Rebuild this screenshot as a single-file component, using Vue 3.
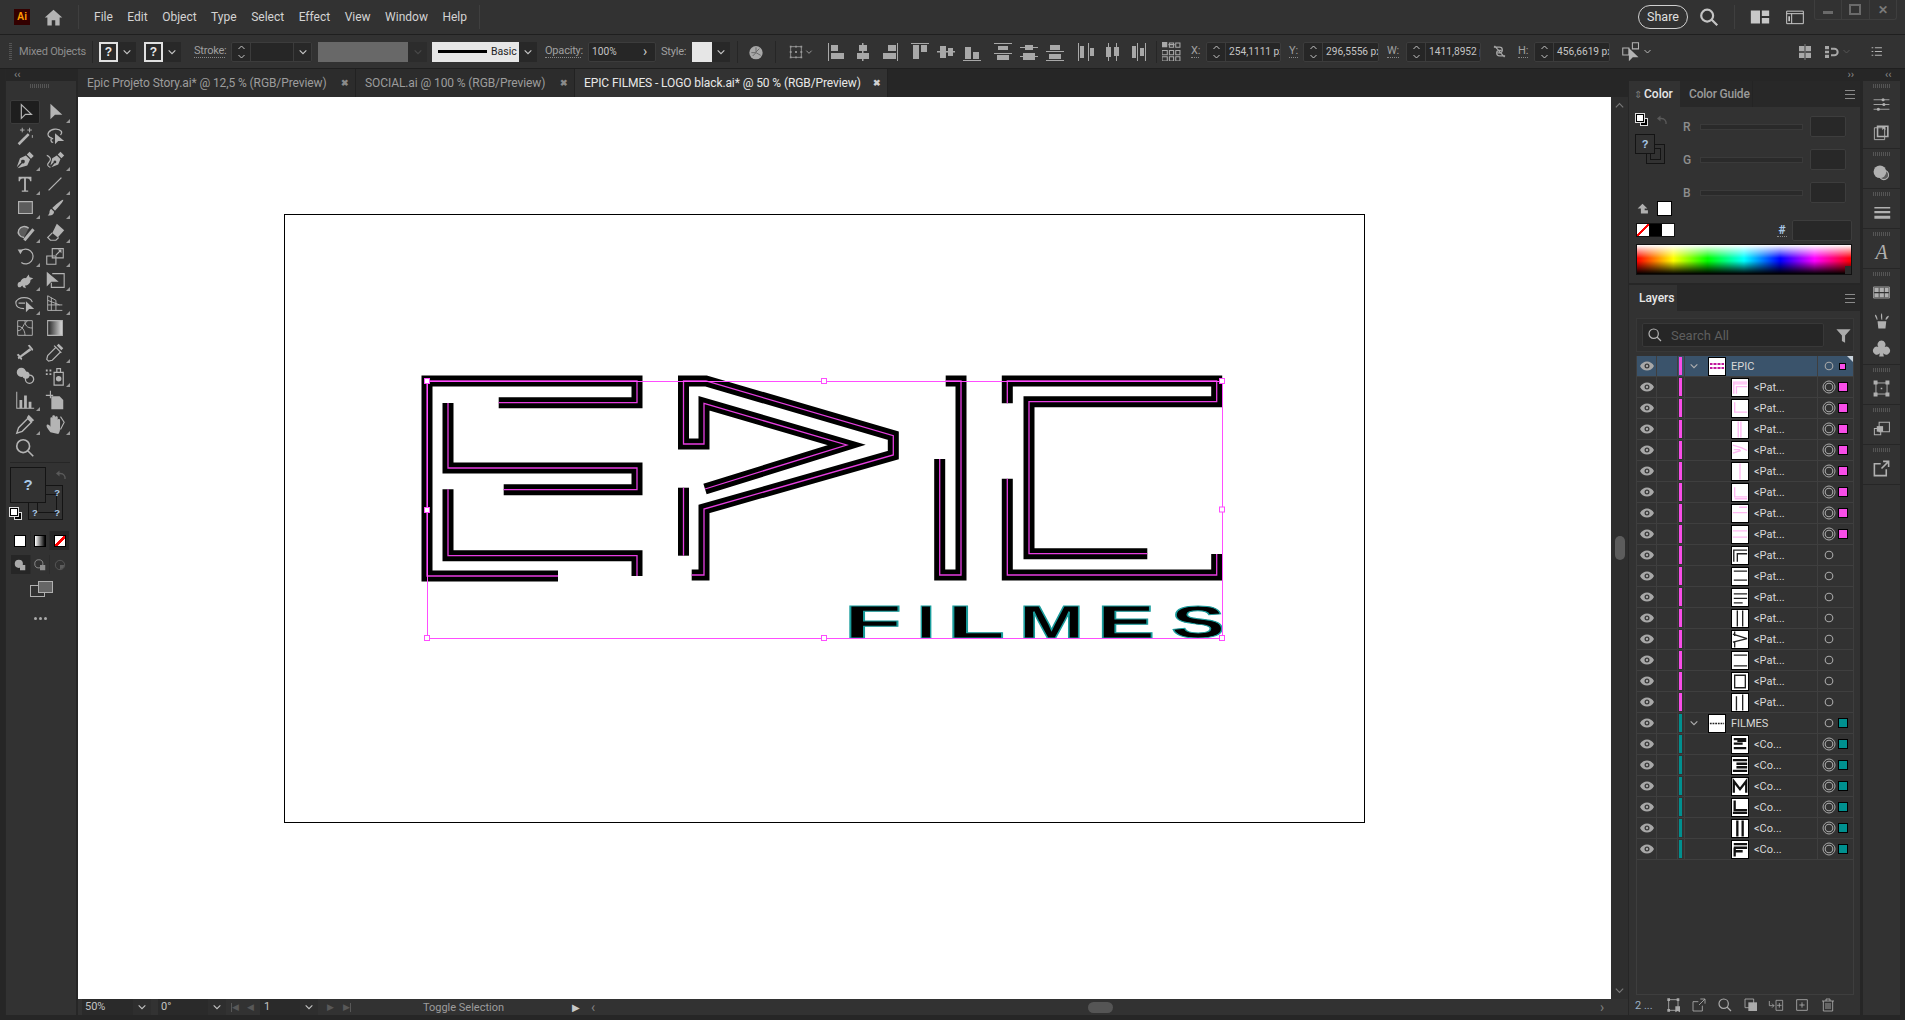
<script setup>
import { h } from 'vue'

const icons = {
  select: { s: 'M8 4v15l4.5-4.5H19z', w: 1.3 },
  direct: { f: 'M7 3v17l5-5h8z' },
  wand: { f: 'M4 20l11-11 2 2L6 22z', s: 'M9 3v5M6.5 5.5h5M17 3v5M14.5 5.5h5M20 11v3', w: 1 },
  lasso: { s: 'M10 15c-5-1-7-4-5-7 3-4 11-5 14-1 1 2 0 3-1 4M9 14c-2 1-2 5 1 5', f: 'M12 9v12l3.5-3.5H22z' },
  pen: { f: 'M17 3l4.5 4.5-3 3L14 6zM13 7l4.500 4.500-3 6.500L4 21l5-5.500a2 2 0 1 0-1-1L3 20 6.500 10z' },
  curve: { f: 'M18 3l4 4-3 3-4-4zM14 7l4 4-2.500 6L8 20l3.500-4.500a1.500 1.500 0 1 0-1-1L7 18l2-8z', s: 'M7 20c-3-1-4-3-2-5s3-4 1-6-3-2-3-2', w: 1.3 },
  type: { f: 'M5 4h14v5h-1.500c0-2-1-3-3-3H13v13h2.500v1.500h-7V19H11V6H9.500c-2 0-3 1-3 3H5z' },
  line: { s: 'M5 19L19 5', w: 1.4 },
  rect: { d: 'M5 5h15v13H5z', s: 'M5 5h15v13H5z', w: 1.2 },
  brush: { f: 'M21 3c1 1-6 9-9 12l-3-3c3-3 11-10 12-9zM8 13l3 3c0 3-3 5-7 4 2-1 2-3 2-4s1-3 2-3z' },
  shaper: { d: 'M11 18a6.500 6 0 1 1 5-10z', s: 'M11 18a6.500 6 0 1 1 5-10', f: 'M10 20l10-12 2.500 2-10 12z' },
  eraser: { f: 'M14 3l8 7-7 8-6-5z', s: 'M9 13l-5 5 3 3h6l3-3', w: 1.2 },
  rotate: { s: 'M7 7a8 8 0 1 1 1 12', f: 'M4 5l6 0-3 5z', w: 1.3 },
  scale: { s: 'M3 12h10v9H3zM9 4h12v10H9zM13 11l5-5', w: 1.2, f: 'M15 5h4v4z' },
  warp: { f: 'M5 20c-2-2-1-6 2-6 1-3 4-5 6-4l3-4 1 3 4 1-3 2c0 4-3 6-6 6l1 3-3-1-1-2-2 2z' },
  free: { f: 'M3 3v16l5-5h8z', s: 'M9 5h13v15H8v-5', w: 1.2 },
  builder: { s: 'M11 17c-5 0-9-2-9-6s5-6 9-6 8 2 9 5M5 11h7', w: 1.2, f: 'M13 9v12l3.500-3.500H22z' },
  persp: { s: 'M4 3v16h16M4 3l9 5v11M4 8l13 5M4 13h16M8 5v14', w: 1 },
  mesh: { s: 'M4 4h16v16H4zM4 10c5 0 8 5 8 10M12 4c0 5 2 8 8 8M4 15c3 0 5-2 6-5s5-6 5-6', w: 1 },
  gradient: { g: 'M4 4h16v16H4z', s: 'M4 4h16v16H4z', w: 1.2 },
  measure: { f: 'M5 20l-1-2 13-10 2 2zM3 15l2-1 4 5-1 2zM15 5l2-1 4 5-1 2z' },
  dropper: { s: 'M5 22l-2-2 1-4 9-9 5 5-9 9zM11 5l8 8', w: 1.3, f: 'M16 3l5 5-2 2-5-5z' },
  blend: { f: 'M8 3a5 5 0 1 1 0 10A5 5 0 0 1 8 3zM13 7a4 4 0 1 1 0 8 4 4 0 0 1 0-8z', s: 'M17 11a4.500 4.500 0 1 1-.1 9 4.500 4.500 0 0 1 .1-9z', w: 1.4 },
  spray: { s: 'M11 8h10v14H11zM14 8V4h4v4', w: 1.3, f: 'M16 12a3 3 0 1 1 0 6 3 3 0 0 1 0-6zM2 5h2v2H2zM6 5h2v2H6zM2 9h2v2H2zM6 9h2v2H6z' },
  graph: { s: 'M3 3v18h19', w: 1.1, f: 'M6 12h3v9H6zM11 7h3v14h-3zM16 14h3v7h-3z' },
  artboard: { f: 'M8 8h9l4 4v10H8z', s: 'M2 7h8M7 2v8', w: 1.2 },
  slice: { s: 'M3 22l2-6L15 6l4 4L9 20z', f: 'M16 2l6 6-3 2-5-5z' },
  hand: { f: 'M7 21c-2-3-5-6-4-8 1-1 3 0 4 2V6c0-2 2-2 2 0v4-6c0-2 3-2 3 0v6-5c0-2 3-2 3 0v6-3c0-2 2.500-2 2.500 0v9c0 3-1 5-2 6z', s: 'M18 4l4 6-4 8', w: 1.2 },
  zoom: { s: 'M10 3a7 7 0 1 1 0 14 7 7 0 0 1 0-14zM15 15l6 6', w: 1.8 },
  home: { f: 'M12 3l10 9h-3v9h-5v-6h-4v6H5v-9H2z' },
  search: { s: 'M10 4a6.500 6.500 0 1 1 0 13 6.500 6.500 0 0 1 0-13zM15 15l6 6', w: 2.4 },
  workspace: { f: 'M2 5h10v14H2zM14 5h8v6h-8zM14 13h8v6h-8z' },
  panelwin: { s: 'M2 5h20v15H2zM2 8h20M8 8v12', w: 1.2, f: 'M4 11h2v6H4z' },
  filter: { f: 'M3 4h18l-7 8v9l-4-2v-7z' },
  sliders: { s: 'M2 6h20M2 12h20M2 18h20', w: 1.1, f: 'M14 4a2 2 0 1 1 0 4 2 2 0 0 1 0-4zM15 10a2 2 0 1 1 0 4 2 2 0 0 1 0-4zM8 16a2 2 0 1 1 0 4 2 2 0 0 1 0-4z' },
  library: { s: 'M3 6h13v15H3z', w: 1.2, f: 'M6 3h15v15H6zm2 2v11h11V5h-2v4l-2-2-2 2V5z' },
  appearance: { f: 'M10 3a8 8 0 1 1 0 16 8 8 0 0 1 0-16z', d: 'M15 9a6 6 0 1 1 0 12 6 6 0 0 1 0-12z', s: 'M15 9a6 6 0 1 1 0 12 6 6 0 0 1 0-12z', w: 1.3 },
  strokep: { f: 'M3 5h20v2H3zM3 10h20v3H3zM3 16h20v4H3z' },
  swatches: { s: 'M2 5h20v14H2z', w: 1, f: 'M3 6h5.500v5.500H3zM9.500 6H15v5.500H9.500zM16 6h5v5.500h-5zM3 13h5.500v5H3zM9.500 13H15v5H9.500zM16 13h5v5h-5z' },
  brushes: { f: 'M7 13h11l-1 9H8zM6 11C5 8 3 6 4 5s3 3 3 6zM12 11c-1-3-1-7 0-8s1 5 1 8zM17 11c0-3 3-5 4-5s-1 4-3 5z' },
  symbols: { f: 'M12 2a5 5 0 0 1 4 8 5 5 0 1 1-2 8l1 4H9l1-4a5 5 0 1 1-2-8 5 5 0 0 1 4-8z' },
  transform: { s: 'M5 5h14v14H5z', w: 1.2, f: 'M2 2h5v5H2zM17 2h5v5h-5zM2 17h5v5H2zM17 17h5v5h-5zM11 11h2v2h-2z' },
  pathfinder: { s: 'M9 4h13v12H9zM3 12h8v8H3z', w: 1.3, f: 'M6 9h8v7H6z' },
  exportp: { s: 'M18 13v8H3V6h8M14 3h7v7M21 3l-9 9', w: 2 },
  artb: { s: 'M4 4h14v16H4z', w: 1.3, f: 'M2 2h4v4H2zM16 2h4v4h-4zM2 18h4v4H2zM14 14h7v9l-3.500-2-3.500 2z' },
  exp2: { s: 'M17 13v8H3V7h8M14 3h7v7M21 3l-9 9', w: 1.3 },
  mag: { s: 'M10 3a7 7 0 1 1 0 14 7 7 0 0 1 0-14zM15 15l6 6', w: 1.8 },
  clip: { s: 'M3 3h13v13H3z', w: 1.3, f: 'M8 8h13v13H8z' },
  sublayer: { s: 'M2 6v7h7M6 10l3 3-3 3M12 5h10v15H12zM17 9v7M13.500 12.500h7', w: 1.2 },
  newl: { s: 'M4 4h16v16H4zM12 8v8M8 12h8', w: 1.3 },
  trash: { s: 'M3 6h18M9 6V3h6v3M5 6v15h14V6M9 9v9M12 9v9M15 9v9', w: 1.3 },
  alignL: { vb: 18, f: 'M0 0h1v18H0zM3 2h7v6H3zM3 10h13v6H3z' },
  alignC: { vb: 18, f: 'M8 0h1.500v18H8zM5 2h8v6H5zM3 10h12v6H3z' },
  alignR: { vb: 18, f: 'M17 0h1v18h-1zM8 2h8v6H8zM3 10h13v6H3z' },
  alignT: { vb: 18, f: 'M0 0h18v1H0zM2 2h6v14H2zM10 2h6v7h-6z' },
  alignM: { vb: 18, f: 'M0 8h18v1.500H0zM3 3h6v12H3zM11 5h5v8h-5z' },
  alignB: { vb: 18, f: 'M0 17h18v1H0zM2 4h6v12H2zM10 9h6v7h-6z' },
  distT: { vb: 18, f: 'M0 0h18v1H0zM4 3h10v4H4zM0 10h18v1H0zM3 12h12v5H3z' },
  distV: { vb: 18, f: 'M0 4h18v1H0zM5 2h8v5H5zM0 13h18v1H0zM3 10h12v7H3z' },
  distB: { vb: 18, f: 'M0 8h18v1H0zM4 2h10v5H4zM0 17h18v1H0zM3 11h12v5H3z' },
  distL: { vb: 18, f: 'M1 0h1v18H1zM3 3h4v12H3zM11 0h1v18h-1zM13 5h4v8h-4z' },
  distC: { vb: 18, f: 'M5 0h1v18H5zM3 4h5v10H3zM13 0h1v18h-1zM11 4h5v9h-5z' },
  distR: { vb: 18, f: 'M8 0h1v18H8zM3 3h4v12H3zM16 0h1v18h-1zM11 5h4v8h-4z' },
  refp: { vb: 18, f: 'M0 0h5v5H0z', s: 'M6 2.500h6M0 8h5v4H0zM7 8h4v4H7zM13 8h4v4h-4zM13 1h4v4h-4zM7 1h4v4H7zM0 14h5v4H0zM7 14h4v4H7zM13 14h4v4h-4z', w: 1 },
  alignto: { vb: 18, s: 'M3 3h12v12H3z', w: 1, f: 'M2 2h2v2H2zM8 2h2v2H8zM14 2h2v2h-2zM2 8h2v2H2zM14 8h2v2h-2zM2 14h2v2H2zM8 14h2v2H8zM14 14h2v2h-2zM8 8h2v2H8z' },
  link: { s: 'M3 5h9a4 4 0 0 1 0 9H9M21 19h-9a4 4 0 0 1 0-9h3M4 3l16 18', w: 2 },
  xform: { s: 'M2 8h7v8H2zM13 2h7v7h-7z', w: 1.2, f: 'M9 8v15l4.500-4.500H20z' },
  isolate: { f: 'M3 3h8v8H3zM13 3h8v8h-8zM3 13h8v8H3zM13 13h8v8h-8z', s: 'M12 0v24', w: 1 },
  arrange: { f: 'M3 3h6v5H3zM3 16h6v5H3zM3 10h6v4H3z', s: 'M12 7h5a5 5 0 0 1 0 10h-5', w: 3 },
  listp: { s: 'M9 5h13M9 12h13M9 19h13M3 5h3M3 12h3M3 19h3', w: 2 },
  globe: { g2: true, f: 'M12 3a10 10 0 1 1 0 20 10 10 0 0 1 0-20z', s: 'M12 5v7M5 13h7M17 7l-5 5M7 18l5-5M19 17l-7-4', w: 1.5 },
  chev: { s: 'M4 8l8 8 8-8', w: 2.6 },
  chevu: { s: 'M4 16l8-8 8 8', w: 2.6 },
  swap: { s: 'M20 20c1-6-3-11-9-11H6', w: 2.6, f: 'M9 3v12L2 9z' },
  oog: { f: 'M12 3l9 9h-5v3h6v6H9v-9H3z' },
  modeN: { f: 'M10 3a7 7 0 1 1 0 14 7 7 0 0 1 0-14zM12 12h9v9h-9z' },
  modeB: { s: 'M10 3a7 7 0 1 1 0 14 7 7 0 0 1 0-14z', w: 1.6, f: 'M12 12h9v9h-9z' },
  modeI: { s: 'M12 4a8 8 0 1 1 0 16 8 8 0 0 1 0-16z', w: 1.4, f: 'M12 12h7a7 7 0 0 1-7 7z' }
}

// small functional icon, everything is drawn from the table above
const Ico = (props) => {
  const ic = icons[props.n]
  const vb = ic.vb || 24
  const c = props.c || '#b4b4b4'
  const size = props.s || 24
  const kids = []
  if (ic.d) kids.push(h('path', { d: ic.d, fill: '#5c5c5c' }))
  if (ic.g) kids.push(h('path', { d: ic.g, fill: 'url(#toolGrad)' }))
  if (ic.f) kids.push(h('path', { d: ic.f, fill: c }))
  if (ic.s) kids.push(h('path', { d: ic.s, fill: 'none', stroke: ic.g2 ? '#6a6a6a' : c, 'stroke-width': ic.w || 1.5 }))
  return h('svg', { viewBox: `0 0 ${vb} ${vb}`, width: size, height: size, style: 'display:block;flex:none' }, kids)
}
Ico.props = ['n', 'c', 's']

const menus = ['File', 'Edit', 'Object', 'Type', 'Select', 'Effect', 'View', 'Window', 'Help']

const docs = [
  { name: 'Epic Projeto Story.ai* @ 12,5 % (RGB/Preview)', cls: 'd1' },
  { name: 'SOCIAL.ai @ 100 % (RGB/Preview)', cls: 'd2' },
  { name: 'EPIC FILMES - LOGO black.ai* @ 50 % (RGB/Preview)', cls: 'd3', active: true }
]

const tools = [
  ['select', 0, 1], ['direct', 1, 0],
  ['wand', 0, 0], ['lasso', 0, 0],
  ['pen', 1, 0], ['curve', 1, 0],
  ['type', 1, 0], ['line', 1, 0],
  ['rect', 1, 0], ['brush', 1, 0],
  ['shaper', 1, 0], ['eraser', 1, 0],
  ['rotate', 1, 0], ['scale', 1, 0],
  ['warp', 1, 0], ['free', 1, 0],
  ['builder', 1, 0], ['persp', 1, 0],
  ['mesh', 0, 0], ['gradient', 0, 0],
  ['measure', 0, 0], ['dropper', 1, 0],
  ['blend', 0, 0], ['spray', 1, 0],
  ['graph', 1, 0], ['artboard', 0, 0],
  ['slice', 1, 0], ['hand', 1, 0],
  ['zoom', 0, 0]
].map(([n, fly, on]) => ({ n, fly, on }))

const alignGroups = [
  ['alignL', 'alignC', 'alignR'],
  ['alignT', 'alignM', 'alignB'],
  ['distT', 'distV', 'distB'],
  ['distL', 'distC', 'distR']
]

const pink = '#f84de8'
const teal = '#00908f'
const pale = '#ffb8f2'
const pathThumbs = [
  [pale, 'M2 16V3h15M2 5h15M5 16V8h12'],
  [pale, 'M3 2v11h14'],
  [pale, 'M7 0v18M10 0v18'],
  [pale, 'M1 3l10 3 6 3M1 12l9-3M2 8l7 0'],
  [pale, 'M9 0v18'],
  [pale, 'M3 3v11h14M3 16h14'],
  [pale, 'M1 8h16M8 2h9'],
  [pale, 'M1 5h16M1 12h16'],
  ['#222', 'M2 16V3h15M6 16V7h11'],
  ['#222', 'M2 3h15M2 13h15'],
  ['#222', 'M2 5h15M2 10h15M2 15h10'],
  ['#222', 'M6 0v18M12 0v18'],
  ['#222', 'M1 3l16 5M1 12l16-4M3 0v5M3 12v6'],
  ['#222', 'M2 3h15M2 15h15'],
  ['#222', 'M3 2h12v14H3z'],
  ['#222', 'M5 2v16M12 0v18']
]
const coThumbs = [
  'M2 3h14M2 8h10M2 13h14M6 5h10',
  'M1 3h16M5 7h12M5 11h12M1 15h16',
  'M2 16V3l7 9 7-9v13',
  'M3 1v11h14M1 15h16',
  'M6 0v18M12 0v18',
  'M2 3h15M2 7h15M2 11h10M3 7v10'
]

const layers = [
  { name: 'EPIC', parent: true, sel: true, bar: pink, ring: 1, sq: pink, mini: true },
  ...pathThumbs.map((t, i) => ({
    name: '<Pat...', bar: pink, ring: i < 8 ? 2 : 1, sq: i < 8 ? pink : null, thumb: t[1], tc: t[0]
  })),
  { name: 'FILMES', parent: true, bar: teal, ring: 1, sq: teal, thumb: 'M1 9h16', tc: '#222', dash: true },
  ...coThumbs.map((d) => ({ name: '<Co...', bar: teal, ring: 2, sq: teal, thumb: d, tc: '#111', thick: true }))
]

const dock = [
  ['sliders', 'library'], ['appearance'], ['strokep'], ['typeA'],
  ['swatches', 'brushes', 'symbols'], ['transform'], ['pathfinder'], ['exportp']
]
const footerIcons = ['artb', 'exp2', 'mag', 'clip', 'sublayer', 'newl', 'trash']

// artwork, in page coordinates (viewBox of the canvas starts at the canvas corner)
const logo = [
  'M558 576H427V381H637V402.700H498.700',
  'M448 403V468H637V489.700H503.700',
  'M448 489.300V555.700H637V576',
  'M705 489L846.700 445L704 403.300V444H683.500V381H706L893.300 435.700V455L704 509V575H691.700',
  'M683.500 487.700V555.700',
  'M945.700 381H961V575H939.700V459',
  'M1007.300 403.300V381H1216.700V401.700H1029V553.700H1147.300',
  'M1007.300 478.700V575H1216.700V554'
]
const filmes = [
  { t: 'F', x: 844, w: 58 }, { t: 'I', x: 917, w: 18 }, { t: 'L', x: 947, w: 58 },
  { t: 'M', x: 1019, w: 65 }, { t: 'E', x: 1097, w: 58 }, { t: 'S', x: 1171, w: 54 }
]
const handles = [
  [824, 381], [1222, 381], [1222, 509.5], [1222, 638], [824, 638], [427, 638]
]
</script>

<template>
  <div class="app">
    <svg class="defs" width="0" height="0">
      <defs>
        <linearGradient id="toolGrad"><stop offset="0" stop-color="#222" /><stop offset="1" stop-color="#ddd" /></linearGradient>
      </defs>
    </svg>

    <header class="menubar">
      <div class="ailogo">Ai</div>
      <Ico class="homeico" n="home" :s="21" />
      <i class="vsep s1"></i>
      <nav class="menus"><span v-for="m in menus" :key="m">{{ m }}</span></nav>
      <i class="vsep s2"></i>
      <div class="winright">
        <div class="share">Share</div>
        <Ico n="search" :s="22" c="#c4c4c4" />
        <i class="vsep s3"></i>
        <Ico n="workspace" :s="22" c="#c8c8c8" />
        <Ico n="panelwin" :s="20" c="#c8c8c8" />
        <div class="winbtns">
          <span class="wb"><b class="minb"></b></span>
          <span class="wb"><b class="maxb"></b></span>
          <span class="wb closeb">✕</span>
        </div>
      </div>
    </header>

    <section class="controlbar">
      <i class="grip"></i>
      <span class="lbl mixed">Mixed Objects</span>
      <i class="csep m11"></i>
      <div class="qdrop m6"><b class="qbox">?</b><span class="dd"><Ico n="chev" :s="10" c="#c8c8c8" /></span></div>
      <div class="qdrop m8"><b class="qbox">?</b><span class="dd"><Ico n="chev" :s="10" c="#c8c8c8" /></span></div>
      <span class="lbl dot m13 wstroke">Stroke:</span>
      <div class="field m6 fstroke">
        <span class="spin"><Ico n="chevu" :s="9" c="#c8c8c8" /><Ico n="chev" :s="9" c="#c8c8c8" /></span>
        <span class="val"></span>
        <span class="dd"><Ico n="chev" :s="10" c="#c8c8c8" /></span>
      </div>
      <div class="graybox m6"><i></i><span class="dd dim"><Ico n="chev" :s="10" c="#4a4a4a" /></span></div>
      <div class="brushbox m5"><div class="brushface"><i></i><span>Basic</span></div><span class="dd"><Ico n="chev" :s="10" c="#c8c8c8" /></span></div>
      <span class="lbl dot m8 wopac">Opacity:</span>
      <div class="field m7 fopac"><span class="val">100%</span><span class="arr">›</span></div>
      <span class="lbl m5 wstyle">Style:</span>
      <div class="stylebox m5"><i></i><span class="dd"><Ico n="chev" :s="10" c="#c8c8c8" /></span></div>
      <i class="csep m7"></i>
      <Ico class="m10" n="globe" :s="16" c="#a8a8a8" />
      <i class="csep m11"></i>
      <div class="alignto m12"><Ico n="alignto" :s="16" c="#9a9a9a" /><Ico class="ch" n="chev" :s="8" c="#aaa" /></div>
      <div class="aligns m16">
        <div v-for="(g, i) in alignGroups" :key="i" class="agroup">
          <Ico v-for="n in g" :key="n" :n="n" :s="18" c="#a8a8a8" />
        </div>
      </div>
      <i class="csep m9"></i>
      <Ico class="m5" n="refp" :s="19" c="#a8a8a8" />
      <span class="lbl dot m10 wx">X:</span>
      <div class="field m7 fx"><span class="spin"><Ico n="chevu" :s="9" c="#c8c8c8" /><Ico n="chev" :s="9" c="#c8c8c8" /></span><span class="val">254,1111 px</span></div>
      <span class="lbl dot m8 wy">Y:</span>
      <div class="field m5 fy"><span class="spin"><Ico n="chevu" :s="9" c="#c8c8c8" /><Ico n="chev" :s="9" c="#c8c8c8" /></span><span class="val">296,5556 px</span></div>
      <span class="lbl dot m8 ww">W:</span>
      <div class="field m7 fx"><span class="spin"><Ico n="chevu" :s="9" c="#c8c8c8" /><Ico n="chev" :s="9" c="#c8c8c8" /></span><span class="val">1411,8952 p</span></div>
      <Ico class="m11" n="link" :s="15" c="#a8a8a8" />
      <span class="lbl dot m11 wh">H:</span>
      <div class="field m6 fy"><span class="spin"><Ico n="chevu" :s="9" c="#c8c8c8" /><Ico n="chev" :s="9" c="#c8c8c8" /></span><span class="val">456,6619 px</span></div>
      <div class="xform m11"><Ico n="xform" :s="21" c="#b4b4b4" /><Ico class="ch" n="chev" :s="9" c="#bbb" /></div>
      <div class="ctlright">
        <Ico n="isolate" :s="16" c="#a8a8a8" />
        <Ico n="arrange" :s="16" c="#a8a8a8" />
        <Ico class="dimch" n="chev" :s="9" c="#555" />
        <Ico class="listico" n="listp" :s="13" c="#b4b4b4" />
      </div>
    </section>

    <div class="workspace">
      <aside class="toolbox">
        <div class="mini"><span>‹‹</span></div>
        <i class="hgrip"></i>
        <div class="toolgrid">
          <div v-for="t in tools" :key="t.n" class="tool" :class="{ on: t.on, fly: t.fly }">
            <Ico :n="t.n" :s="22" />
          </div>
        </div>
        <div class="toolsep"></div>
        <div class="proxy">
          <div class="fillbox">?</div>
          <div class="strokebox">
            <i class="strokein"></i>
            <b class="q1">?</b><b class="q2">?</b><b class="q3">?</b>
          </div>
          <Ico class="swaparr" n="swap" :s="12" c="#5a5a5a" />
          <div class="defcol"><i></i><i></i></div>
        </div>
        <div class="btnrow">
          <span><i class="cw"></i></span>
          <span><i class="cg"></i></span>
          <span class="cur"><i class="cn"></i></span>
        </div>
        <div class="btnrow modes">
          <span class="cur"><Ico n="modeN" :s="14" c="#aaa" /></span>
          <span><Ico n="modeB" :s="14" c="#8e8e8e" /></span>
          <span><Ico n="modeI" :s="14" c="#5c5c5c" /></span>
        </div>
        <div class="screenmode"><i></i><i></i></div>
        <div class="dots"><i></i><i></i><i></i></div>
      </aside>

      <main class="center">
        <div class="doctabs">
          <div v-for="d in docs" :key="d.name" class="doctab" :class="[d.cls, { active: d.active }]">
            <span>{{ d.name }}</span><b>✖</b>
          </div>
        </div>
        <div class="canvasrow">
          <svg class="canvas" viewBox="78 97 1533 902" width="1533" height="902">
            <rect x="284.500" y="214.500" width="1080" height="608" fill="#fff" stroke="#000" stroke-width="1" />
            <path v-for="d in logo" :key="d" :d="d" fill="none" stroke="#000" stroke-width="11" stroke-miterlimit="10" />
            <text
              v-for="l in filmes" :key="l.t" :x="l.x" y="638" :textLength="l.w" lengthAdjust="spacingAndGlyphs"
              font-family="Liberation Sans" font-weight="700" font-size="47" fill="#000" stroke="#1a9c9c" stroke-width="1"
            >{{ l.t }}</text>
            <path v-for="d in logo" :key="'m' + d" :d="d" fill="none" stroke="#e63de0" stroke-width="1.300" stroke-miterlimit="10" />
            <rect x="427.500" y="381.500" width="795" height="257" fill="none" stroke="#ff4dff" stroke-width="1" />
            <rect x="424.500" y="378.500" width="5" height="5" fill="#fff" stroke="#ff4dff" />
            <rect x="424.500" y="507.500" width="5" height="5" fill="#fff" stroke="#ff4dff" />
            <rect v-for="p in handles" :key="p[0] + '-' + p[1]" :x="p[0] - 2.5" :y="p[1] - 2.5" width="5" height="5" fill="#fff" stroke="#ff4dff" />
          </svg>
          <div class="vscroll">
            <Ico class="sarrow" n="chevu" :s="11" c="#777" />
            <i class="vthumb"></i>
            <Ico class="sarrow" n="chev" :s="11" c="#777" />
          </div>
        </div>
        <footer class="statusbar">
          <div class="sf w50"><span>50%</span></div><span class="sd"><Ico n="chev" :s="10" c="#c4c4c4" /></span>
          <div class="sf w50b"><span>0°</span></div><span class="sd"><Ico n="chev" :s="10" c="#c4c4c4" /></span>
          <span class="nav"><i class="bar"></i>◀</span><span class="nav">◀</span>
          <div class="sf w40"><span>1</span></div><span class="sd"><Ico n="chev" :s="10" c="#c4c4c4" /></span>
          <span class="nav nr">▶</span><span class="nav">▶<i class="bar"></i></span>
          <span class="toggle">Toggle Selection</span>
          <span class="play">▶</span>
          <span class="lt">‹</span>
          <div class="hscroll"><i></i></div>
          <span class="lt rt">›</span>
        </footer>
      </main>

      <div class="panels">
        <div class="mini right"><span>››</span></div>
        <section class="panel color">
          <div class="ptabs">
            <div class="ptab on"><em class="updown">⇕</em>Color</div>
            <div class="ptab off">Color Guide</div>
            <div class="pmenu"><i></i><i></i><i></i></div>
          </div>
          <div class="colorbody">
            <div class="cleft">
              <div class="cmini">
                <div class="defcol small"><i></i><i></i></div>
                <Ico class="swaparr2" n="swap" :s="12" c="#5a5a5a" />
              </div>
              <div class="cproxy">
                <div class="cfill">?</div>
                <div class="cstroke"><i></i></div>
              </div>
              <div class="oog"><Ico n="oog" :s="13" c="#b0b0b0" /><i></i></div>
              <div class="nbw"><i class="cn2"></i><i class="bk"></i><i class="wh2"></i></div>
            </div>
            <div class="cright">
              <div v-for="c in ['R', 'G', 'B']" :key="c" class="crow">
                <span>{{ c }}</span><i class="track"></i><i class="cinput"></i>
              </div>
              <div class="hexrow"><span class="hash">#</span><i class="hexin"></i></div>
            </div>
          </div>
          <div class="spectrum"><i></i></div>
        </section>

        <section class="panel layers">
          <div class="ptabs">
            <div class="ptab on ltab">Layers</div>
            <div class="pmenu"><i></i><i></i><i></i></div>
          </div>
          <div class="searchrow">
            <div class="searchbox"><Ico n="mag" :s="16" c="#b4b4b4" /><span>Search All</span></div>
            <Ico class="filt" n="filter" :s="19" c="#aaa" />
          </div>
          <div class="layerlist">
            <div v-for="(l, i) in layers" :key="i" class="lrow" :class="{ sel: l.sel }">
              <div class="eyec">
                <svg width="14" height="10" viewBox="0 0 14 10"><path d="M0 5c3-6 11-6 14 0-3 6-11 6-14 0z" fill="#a8a8a8" /><circle cx="7" cy="5" r="2.500" fill="#3a3a3a" /><circle cx="7" cy="5" r="1.200" fill="#a8a8a8" /></svg>
              </div>
              <div class="lockc"></div>
              <div class="barc"><i :style="{ background: l.bar }"></i></div>
              <div class="namec" :class="{ child: !l.parent }">
                <Ico v-if="l.parent" class="chevr" n="chev" :s="10" c="#b0b0b0" />
                <div class="thumb">
                  <svg v-if="l.mini" width="16" height="17" viewBox="0 0 16 17"><path d="M1 5h14v2H1zM1 9h14v2H1z" fill="#c0189c" /><path d="M4 4v8M8 4v8M12 4v8" stroke="#fff" stroke-width="1" /></svg>
                  <svg v-else width="16" height="17" viewBox="0 0 18 18">
                    <path :d="l.thumb" fill="none" :stroke="l.tc" :stroke-width="l.thick ? 2.600 : 1.500" :stroke-dasharray="l.dash ? '2 1' : null" />
                  </svg>
                </div>
                <span class="lname">{{ l.name }}</span>
              </div>
              <div class="targetc">
                <svg width="14" height="14" viewBox="0 0 14 14" fill="none" stroke="#a8a8a8">
                  <circle cx="7" cy="7" r="3.800" stroke-width="1.100" />
                  <circle v-if="l.ring === 2" cx="7" cy="7" r="6" stroke-width="1" />
                </svg>
                <i v-if="l.sq" class="sq" :class="{ smallsq: l.name === 'EPIC' }" :style="{ background: l.sq }"></i>
              </div>
              <i v-if="l.sel" class="corner"></i>
            </div>
          </div>
          <div class="lfooter">
            <span>2 ...</span>
            <div class="ficons"><Ico v-for="n in footerIcons" :key="n" :n="n" :s="16" c="#aaa" /></div>
          </div>
        </section>
      </div>

      <aside class="strip">
        <div class="mini stripmini"><span>‹‹</span></div>
        <div v-for="(g, i) in dock" :key="i" class="dockgroup">
          <i class="dgrip"></i>
          <template v-for="n in g" :key="n">
            <span v-if="n === 'typeA'" class="typea">A</span>
            <Ico v-else :n="n" :s="19" c="#b0b0b0" />
          </template>
        </div>
      </aside>
    </div>
  </div>
</template>

<style>
html, body { margin: 0; background: #262626; overflow: hidden; }
</style>

<style scoped>
.app {
  width: 1905px;
  height: 1020px;
  display: flex;
  flex-direction: column;
  background: #262626;
  overflow: hidden;
  font-family: Roboto, "Liberation Sans", sans-serif;
  font-size: 12px;
  color: #b8b8b8;
}
.defs { position: absolute; }
i, em, b { font-style: normal; display: block; }

/* top menu */
.menubar {
  height: 34px;
  flex: none;
  display: flex;
  align-items: center;
  background: #323232;
  border-bottom: 1px solid #1f1f1f;
}
.ailogo {
  width: 16px;
  height: 16px;
  margin-left: 14px;
  background: #330000;
  color: #ff9a00;
  font: 700 10px/16px "Liberation Sans", sans-serif;
  text-align: center;
}
.homeico { margin-left: 13px; }
.vsep { width: 1px; height: 24px; background: #3f3f3f; }
.s1 { margin-left: 14px; }
.s2 { margin-left: 12px; }
.s3 { height: 24px; }
.menus { display: flex; gap: 14.500px; margin-left: 15px; font-size: 12px; color: #d4d4d4; }
.winright { margin-left: auto; display: flex; align-items: center; gap: 14px; height: 100%; }
.share {
  width: 50px;
  height: 24px;
  box-sizing: border-box;
  border: 1px solid #d0d0d0;
  border-radius: 12px;
  text-align: center;
  line-height: 22px;
  color: #e0e0e0;
  font-size: 12.500px;
  margin-right: -4px;
}
.winbtns {
  display: flex;
  align-self: flex-start;
  width: 83px;
  height: 20px;
  margin: 0 8px 0 -5px;
  box-sizing: border-box;
  border: 1px solid #3e3e3e;
  border-top: 0;
  border-radius: 0 0 3px 3px;
}
.wb { flex: 1; display: flex; align-items: center; justify-content: center; border-right: 1px solid #3e3e3e; }
.wb:last-child { border-right: 0; }
.minb { width: 10px; height: 3px; background: #6a6a6a; margin-top: 5px; }
.maxb { width: 8px; height: 7px; border: 2px solid #6a6a6a; }
.closeb { font-size: 12px; color: #7a7a7a; font-weight: 700; }

/* control bar */
.controlbar {
  height: 33px;
  flex: none;
  display: flex;
  align-items: center;
  padding-left: 9px;
  background: #323232;
  border-bottom: 1px solid #1f1f1f;
  font-size: 11px;
}
.grip { width: 3px; height: 18px; background: repeating-linear-gradient(#555 0 1px, transparent 1px 2px); }
.lbl { color: #a0a0a0; white-space: nowrap; flex: none; letter-spacing: -0.2px; }
.dot { border-bottom: 1px dotted #888; line-height: 12px; }
.mixed { margin-left: 7px; width: 62px; color: #8e8e8e; }
.csep { width: 1px; height: 22px; background: #262626; flex: none; }
.m5 { margin-left: 5px; } .m6 { margin-left: 6px; } .m7 { margin-left: 7px; } .m8 { margin-left: 8px; }
.m9 { margin-left: 9px; } .m10 { margin-left: 10px; } .m11 { margin-left: 11px; } .m12 { margin-left: 12px; }
.m13 { margin-left: 13px; } .m16 { margin-left: 16px; }
.qdrop { display: flex; width: 37px; height: 20px; background: #282828; flex: none; }
.qbox {
  width: 19px;
  box-sizing: border-box;
  border: 2px solid #e0e0e0;
  background: #2a2a2a;
  color: #e8e8e8;
  text-align: center;
  font: 700 12px/16px "Liberation Sans", sans-serif;
}
.dd { flex: 1; display: flex; align-items: center; justify-content: center; min-width: 17px; background: #282828; }
.dd.dim { background: #2c2c2c; }
.wstroke { width: 31px; } .wopac { width: 36px; } .wstyle { width: 26px; }
.wx { width: 8px; } .wy { width: 9px; } .ww { width: 12px; } .wh { width: 10px; }
.field {
  display: flex;
  height: 20px;
  box-sizing: border-box;
  border: 1px solid #3c3c3c;
  border-radius: 2px;
  background: #262626;
  flex: none;
  align-items: stretch;
  color: #c4c4c4;
  overflow: hidden;
}
.spin {
  width: 18px;
  flex: none;
  display: flex;
  flex-direction: column;
  align-items: center;
  justify-content: center;
  border-right: 1px solid #3c3c3c;
}
.val { flex: 1; line-height: 18px; padding-left: 3px; white-space: nowrap; font-size: 10.200px; }
.fstroke { width: 81px; }
.fstroke .dd { flex: none; width: 17px; border-left: 1px solid #3c3c3c; }
.fopac { width: 68px; }
.arr { width: 20px; text-align: center; line-height: 17px; font-size: 14px; color: #ccc; }
.fx { width: 75px; } .fy { width: 76px; }
.graybox { display: flex; width: 109px; height: 20px; flex: none; }
.graybox i { width: 90px; background: #686868; }
.brushbox { display: flex; width: 105px; height: 20px; flex: none; background: #282828; }
.brushface { width: 87px; display: flex; align-items: center; background: #e6e6e6; color: #222; font-size: 10.500px; }
.brushface i { width: 49px; height: 3px; background: #000; margin: 0 4px 0 6px; }
.stylebox { display: flex; width: 38px; height: 20px; flex: none; background: #282828; }
.stylebox i { width: 20px; background: #e6e6e6; }
.alignto, .xform { display: flex; align-items: center; flex: none; }
.alignto { width: 24px; } .xform { width: 31px; }
.ch { margin-left: 1px; }
.aligns { display: flex; width: 319px; justify-content: space-between; flex: none; }
.agroup { display: flex; gap: 8px; }
.ctlright { margin-left: auto; margin-right: 22px; display: flex; align-items: center; gap: 10px; }
.dimch { margin-left: -7px; }
.listico { margin-left: 9px; }

/* workspace */
.workspace { flex: 1; min-height: 0; display: flex; padding-bottom: 5px; background: #262626; }
.toolbox {
  width: 71px;
  margin-left: 5px;
  margin-right: 2px;
  flex: none;
  background: #323232;
  display: flex;
  flex-direction: column;
  align-items: flex-start;
  border-left: 1px solid #272727;
  box-sizing: border-box;
}
.mini { height: 12px; width: 100%; background: #262626; color: #8a8a8a; font-size: 11px; line-height: 12px; padding-left: 8px; box-sizing: border-box; flex: none; }
.mini.right { text-align: right; padding-right: 6px; }
.hgrip { width: 20px; height: 4px; margin: 3px 0 12px 24px; background: repeating-linear-gradient(90deg, #555 0 1px, transparent 1px 2px); flex: none; }
.toolgrid { display: grid; grid-template-columns: 30px 30px; grid-auto-rows: 24px; margin-left: 4px; }
.tool { position: relative; display: flex; align-items: center; justify-content: center; border-radius: 2px; }
.tool.on { background: #1e1e1e; border: 1px solid #3b3b3b; box-sizing: border-box; }
.tool.fly::after {
  content: "";
  position: absolute;
  right: 0;
  bottom: 1px;
  border-left: 4px solid transparent;
  border-bottom: 4px solid #999;
}
.toolsep { width: 60px; height: 1px; background: #262626; margin: 2px 0 4px 4px; flex: none; }
.proxy { position: relative; width: 60px; height: 56px; margin-left: 4px; flex: none; }
.fillbox {
  position: absolute;
  left: 0;
  top: 0;
  width: 36px;
  height: 36px;
  box-sizing: border-box;
  border: 1px solid #141414;
  background: #323232;
  z-index: 1;
  color: #a9c9e8;
  font: 700 15px/34px "Liberation Sans", sans-serif;
  text-align: center;
}
.strokebox { position: absolute; left: 18px; top: 18px; width: 35px; height: 35px; box-sizing: border-box; border: 1px solid #141414; background: #323232; }
.strokein { position: absolute; left: 8px; top: 8px; width: 18px; height: 17px; border: 1px solid #141414; }
.strokebox b { position: absolute; color: #a9c9e8; font: 700 9.500px/10px "Liberation Sans", sans-serif; }
.q1 { right: 2px; top: 2px; } .q2 { left: 3px; bottom: 1px; } .q3 { right: 2px; bottom: 1px; }
.swaparr { position: absolute; left: 45px; top: 2px; }
.defcol { position: absolute; left: 0; top: 41px; width: 12px; height: 12px; }
.defcol i { position: absolute; box-sizing: border-box; width: 8px; height: 8px; border: 1px solid #ddd; }
.defcol i:first-child { left: 0; top: 0; background: #fff; border-color: #000; outline: 1px solid #ddd; z-index: 1; }
.defcol i:last-child { right: 0; bottom: 0; background: #000; }
.btnrow { display: flex; width: 58px; height: 19px; margin: 8px 0 0 5px; border-radius: 2px; background: #2c2c2c; flex: none; gap: 1px; }
.btnrow span { flex: 1; display: flex; align-items: center; justify-content: center; background: #323232; }
.btnrow span.cur { background: #262626; }
.btnrow i { width: 12px; height: 12px; border: 1px solid #000; box-sizing: border-box; }
.cw { background: #fff; }
.cg { background: linear-gradient(90deg, #fff, #000); }
.cn { background: linear-gradient(135deg, #fff 40%, #f00 40% 60%, #fff 60%); }
.modes { margin-top: 5px; }
.screenmode { position: relative; width: 23px; height: 16px; margin: 7px 0 0 24px; flex: none; }
.screenmode i { position: absolute; width: 13px; height: 10px; border: 1px solid #b0b0b0; }
.screenmode i:first-child { left: 0; bottom: 0; }
.screenmode i:last-child { right: 0; top: 0; background: #666; }
.dots { display: flex; gap: 2px; margin: 20px 0 0 28px; }
.dots i { width: 3px; height: 3px; border-radius: 50%; background: #aaa; }

/* center */
.center { width: 1550px; flex: none; display: flex; flex-direction: column; }
.doctabs { height: 28px; flex: none; display: flex; background: #262626; }
.doctab {
  display: flex;
  align-items: center;
  justify-content: space-between;
  box-sizing: border-box;
  padding: 0 6px 0 9px;
  background: #2c2c2c;
  border-right: 1px solid #222;
  color: #9c9c9c;
  white-space: nowrap;
  letter-spacing: -0.1px;
}
.doctab b { font-size: 9px; color: #8a8a8a; }
.d1 { width: 278px; } .d2 { width: 219px; } .d3 { width: 313px; }
.doctab.active { background: #323232; color: #e8e8e8; }
.doctab.active b { color: #d0d0d0; }
.canvasrow { flex: 1; min-height: 0; display: flex; }
.canvas { display: block; background: #fff; flex: none; }
.vscroll { flex: 1; background: #2e2e2e; display: flex; flex-direction: column; align-items: center; justify-content: space-between; padding: 3px 0; }
.vthumb { width: 10px; height: 24px; background: #5c5c5c; border-radius: 5px; }
.statusbar { height: 16px; flex: none; display: flex; align-items: center; background: #323232; font-size: 11px; padding-left: 4px; }
.sf { background: #2a2a2a; height: 16px; line-height: 16px; padding-left: 3px; box-sizing: border-box; color: #c4c4c4; }
.w50 { width: 51px; } .w50b { width: 50px; margin-left: 7px; } .w40 { width: 40px; margin-left: 2px; padding-left: 4px; }
.sd { width: 18px; height: 16px; display: flex; align-items: center; justify-content: center; background: #2e2e2e; }
.nav { display: flex; align-items: center; justify-content: center; color: #585858; width: 15px; font-size: 9px; margin-left: 1px; }
.nav .bar { width: 1px; height: 9px; background: #585858; }
.nr { margin-left: 5px; }
.toggle { width: 209px; text-align: center; margin-left: 5px; color: #9c9c9c; flex: none; }
.play { color: #c8c8c8; font-size: 10px; width: 11px; margin-left: 4px; }
.lt { color: #808080; width: 14px; text-align: center; font-size: 14px; line-height: 12px; margin-left: 3px; }
.hscroll { flex: 1; display: flex; padding-left: 488px; height: 100%; align-items: center; }
.hscroll i { width: 25px; height: 11px; border-radius: 6px; background: #555; }
.rt { margin-left: 0; margin-right: 19px; }

/* right panels */
.panels { width: 231px; margin-left: 1px; flex: none; display: flex; flex-direction: column; gap: 2px; }
.panels .mini { margin-bottom: -2px; }
.panel { background: #323232; display: flex; flex-direction: column; }
.color { height: 202px; flex: none; }
.layers { flex: 1; min-height: 0; }
.ptabs { height: 26px; flex: none; display: flex; align-items: stretch; background: #282828; position: relative; }
.ptab { display: flex; align-items: center; font-size: 12px; }
.ptab.on { background: #323232; color: #e8e8e8; font-weight: 500; width: 51px; box-sizing: border-box; padding-left: 5px; }
.ptab.off { color: #9a9a9a; padding-left: 9px; font-weight: 500; border-right: 1px solid #242424; width: 73px; box-sizing: border-box; letter-spacing: -0.2px; }
.ltab { width: 48px !important; padding-left: 10px !important; }
.updown { color: #777; font-size: 10px; margin-right: 2px; }
.pmenu { margin-left: auto; margin-right: 5px; align-self: center; width: 10px; display: flex; flex-direction: column; gap: 3px; }
.pmenu i { height: 1px; background: #8a8a8a; }
.colorbody { display: flex; height: 134px; flex: none; }
.cleft { width: 50px; padding-left: 7px; box-sizing: border-box; flex: none; display: flex; flex-direction: column; }
.cmini { display: flex; height: 18px; margin-top: 7px; flex: none; }
.defcol.small { position: relative; left: 0; top: 0; flex: none; }
.swaparr2 { margin-left: 8px; }
.cproxy { position: relative; height: 50px; margin-top: 2px; flex: none; }
.cfill { position: absolute; left: -1px; top: 0; width: 20px; height: 20px; box-sizing: border-box; border: 1px solid #141414; background: #323232; z-index: 1; text-align: center; font: 700 11px/18px "Liberation Sans", sans-serif; color: #a9c9e8; }
.cstroke { position: absolute; left: 10px; top: 10px; width: 19px; height: 20px; box-sizing: border-box; border: 1px solid #141414; }
.cstroke i { margin: 3px; height: 10px; border: 1px solid #141414; }
.oog { display: flex; align-items: center; gap: 8px; height: 15px; margin-top: 17px; flex: none; }
.oog i { width: 15px; height: 15px; box-sizing: border-box; border: 1px solid #000; background: #fff; }
.nbw { display: flex; width: 39px; height: 14px; margin-top: 7px; flex: none; border: 1px solid #111; box-sizing: border-box; }
.nbw i { flex: 1; }
.cn2 { background: linear-gradient(135deg, #fff 42%, #f00 42% 58%, #fff 58%); }
.bk { background: #000; }
.wh2 { background: #fff; }
.cright { flex: 1; padding-top: 9px; box-sizing: border-box; }
.crow { display: flex; align-items: center; height: 21px; margin-bottom: 12px; color: #8e8e8e; font-weight: 500; }
.crow span { width: 17px; margin-left: 4px; }
.track { width: 103px; height: 6px; box-sizing: border-box; background: #2a2a2a; border: 1px solid #3a3a3a; }
.cinput { width: 36px; height: 21px; margin-left: 7px; box-sizing: border-box; background: #282828; border: 1px solid #3d3d3d; border-radius: 2px; }
.hexrow { display: flex; align-items: center; margin-left: 105px; height: 21px; margin-top: 17px; }
.hash { width: 10px; border-bottom: 1px dotted #888; color: #a9c9e8; line-height: 11px; text-align: center; margin-right: 5px; margin-left: -7px; font-weight: 700; }
.hexin { width: 60px; height: 21px; box-sizing: border-box; background: #282828; border: 1px solid #3d3d3d; border-radius: 2px; }
.spectrum {
  position: relative;
  width: 214px;
  height: 29px;
  margin: 4px 0 0 8px;
  outline: 1px solid #111;
  background:
    linear-gradient(#fff, transparent 45%, transparent 55%, #000),
    linear-gradient(90deg, #f00, #ff0 17%, #0f0 33%, #0ff 50%, #00f 67%, #f0f 83%, #f00);
}
.spectrum i { position: absolute; right: 0; bottom: 0; width: 6px; height: 8px; background: #2c2c2c; }
.searchrow {
  display: flex;
  align-items: center;
  margin: 7px 6px 4px 7px;
  height: 34px;
  flex: none;
  background: #2e2e2e;
  border: 1px solid #383838;
  box-sizing: border-box;
  padding-left: 5px;
}
.searchbox {
  width: 185px;
  height: 24px;
  background: #262626;
  border: 1px solid #383838;
  border-radius: 2px;
  box-sizing: border-box;
  display: flex;
  align-items: center;
  gap: 8px;
  padding-left: 4px;
  color: #5e5e5e;
  font-size: 13px;
}
.filt { margin-left: 10px; }
.layerlist { flex: 1; min-height: 0; margin: 0 6px 0 7px; box-sizing: border-box; border: 1px solid #3e3e3e; border-top: 0; }
.lrow { position: relative; height: 21px; display: flex; box-sizing: border-box; border-bottom: 1px solid #3f3f3f; }
.lrow.sel { background: #3a536b; }
.eyec { width: 20px; flex: none; border-right: 1px solid #3f3f3f; display: flex; align-items: center; justify-content: center; box-sizing: border-box; }
.eyec svg, .targetc svg, .thumb svg { display: block; }
.lockc { width: 21px; flex: none; border-right: 1px solid #3f3f3f; box-sizing: border-box; }
.barc { width: 7px; flex: none; padding: 1px 2px 0 1px; box-sizing: border-box; border-right: 1px solid #3f3f3f; }
.barc i { width: 3px; height: 18px; }
.namec { flex: 1; display: flex; align-items: center; padding-left: 23px; color: #d8d8d8; font-size: 11px; }
.namec.child { padding-left: 46px; }
.chevr { position: absolute; left: 52px; top: 5px; }
.thumb { width: 18px; height: 19px; box-sizing: border-box; background: #fff; border: 1px solid #000; margin-right: 5px; flex: none; overflow: hidden; }
.targetc { width: 36px; flex: none; border-left: 1px solid #3f3f3f; display: flex; align-items: center; padding-left: 4px; box-sizing: border-box; gap: 2px; }
.sq { width: 8px; height: 8px; border: 1px solid #000; }
.smallsq { width: 5px; height: 5px; margin-left: 1px; }
.corner { position: absolute; right: 0; top: 0; border-left: 6px solid transparent; border-top: 6px solid #c8d2dc; }
.lfooter { height: 20px; flex: none; display: flex; align-items: center; padding-left: 6px; font-size: 11px; color: #9cb0c4; }
.ficons { display: flex; gap: 9.700px; margin-left: 13px; }

/* dock strip */
.strip { width: 37px; margin-left: 3px; flex: none; background: #323232; display: flex; flex-direction: column; }
.stripmini { padding-left: 22px; }
.dockgroup {
  display: flex;
  flex-direction: column;
  align-items: center;
  border-bottom: 1px solid #262626;
  padding-bottom: 6.500px;
  gap: 9px;
  box-sizing: border-box;
}
.dgrip { width: 18px; height: 4px; margin-top: 3px; margin-bottom: -2.500px; background: repeating-linear-gradient(90deg, #555 0 1px, transparent 1px 2px); }
.typea { font: italic 20px/19px "Liberation Serif", serif; color: #b0b0b0; height: 19px; }
</style>
